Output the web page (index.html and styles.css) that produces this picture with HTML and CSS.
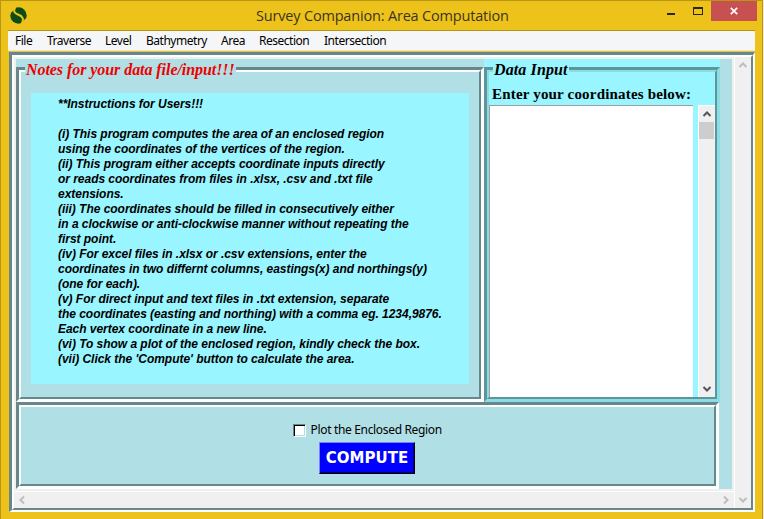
FILE: index.html
```html
<!DOCTYPE html>
<html lang="en">
<head>
<meta charset="utf-8">
<title>Survey Companion: Area Computation</title>
<link rel="stylesheet" href="styles.css">
</head>
<body>
<div class="window">
  <header class="titlebar">
    <svg class="logo" width="17" height="17" viewBox="0 0 17 17"><circle cx="8.5" cy="8.5" r="8.2" fill="#0d4d13"/><path d="M5.5 0C2.5 5 5 6.5 8.5 7.8C12.5 9.2 14.5 12 11.5 17" fill="none" stroke="#edc31b" stroke-width="2"/><path d="M0 0H6L2 5L0 6ZM17 17H11L15 12L17 11Z" fill="#edc31b"/></svg>
    <h1>Survey Companion: Area Computation</h1>
    <div class="controls">
      <span class="minimize"></span><span class="maximize"></span>
      <span class="close"><svg width="8" height="8" viewBox="0 0 8 8"><path d="M.8.8L7.2 7.2M7.2.8L.8 7.2" stroke="#fff" stroke-width="1.7"/></svg></span>
    </div>
  </header>
  <nav class="menu"><span>File</span><span>Traverse</span><span>Level</span><span>Bathymetry</span><span>Area</span><span>Resection</span><span>Intersection</span></nav>
  <main class="groove outer"><div class="groove-in shell">
    <div class="canvas">
      <div class="top">
        <section class="notes">
          <h2 class="legend"><span class="notes-title">Notes for your data file/input!!!</span></h2>
          <div class="groove frame"><div class="groove-in notes-in">
            <div class="instructions">**Instructions for Users!!!

(i) This program computes the area of an enclosed region
using the coordinates of the vertices of the region.
(ii) This program either accepts coordinate inputs directly
or reads coordinates from files in .xlsx, .csv and .txt file
extensions.
(iii) The coordinates should be filled in consecutively either
in a clockwise or anti-clockwise manner without repeating the
first point.
(iv) For excel files in .xlsx or .csv extensions, enter the
coordinates in two differnt columns, eastings(x) and northings(y)
(one for each).
(v) For direct input and text files in .txt extension, separate
the coordinates (easting and northing) with a comma eg. 1234,9876.
Each vertex coordinate in a new line.
(vi) To show a plot of the enclosed region, kindly check the box.
(vii) Click the 'Compute' button to calculate the area.</div>
          </div></div>
        </section>
        <section class="data">
          <h2 class="legend"><span class="data-title">Data Input</span></h2>
          <div class="groove frame aqua"><div class="groove-in data-in">
            <div class="prompt"><span>Enter your coordinates below:</span></div>
            <div class="entry">
              <div class="textarea"></div>
              <div class="scroll inner-scroll">
                <svg class="arrow dark" viewBox="0 0 16 16"><path d="M4.5 10L8 6.5L11.5 10"/></svg>
                <div class="thumb"></div>
                <svg class="arrow dark down" viewBox="0 0 16 16"><path d="M4.5 6L8 9.5L11.5 6"/></svg>
              </div>
            </div>
          </div></div>
        </section>
      </div>
      <section class="groove actions"><div class="groove-in actions-in">
        <label class="check"><i class="box"></i><span>Plot the Enclosed Region</span></label>
        <button class="compute"><span>COMPUTE</span></button>
      </div></section>
    </div>
    <div class="scroll vscroll">
      <svg class="arrow" viewBox="0 0 16 16"><path d="M4.5 10L8 6.5L11.5 10"/></svg>
      <svg class="arrow down" viewBox="0 0 16 16"><path d="M4.5 6L8 9.5L11.5 6"/></svg>
    </div>
    <div class="scroll hscroll">
      <svg class="arrow" viewBox="0 0 16 16"><path d="M10 4.5L6.5 8L10 11.5"/></svg>
      <svg class="arrow" viewBox="0 0 16 16"><path d="M6 4.5L9.5 8L6 11.5"/></svg>
    </div>
  </div></main>
</div>
</body>
</html>
```
FILE: styles.css
```css
* { box-sizing: border-box; }
body { margin: 0; width: 764px; height: 519px; overflow: hidden; background: #f3ecd0; color: #000; }
h1, h2 { margin: 0; font-weight: normal; }
svg { display: block; }
.window { width: 763px; height: 519px; background: #edc31b; border: 1px solid #b79615; border-bottom: 0; padding: 0 7px 0 7px; }
.titlebar { height: 30px; display: flex; justify-content: space-between; border-bottom: 1px solid #b79615; }
.logo { margin: 6px 0 0 2px; flex: none; }
h1 { font: 14.5px/30px "Open Sans", sans-serif; color: #3b3420; white-space: nowrap; width: 254px; margin-left: 72px; letter-spacing: -.18px; }
.controls { display: flex; width: 90px; height: 20px; margin-right: -2px; }
.minimize { width: 8px; height: 2px; background: #2b2718; margin: 12px 18px 0 0; }
.maximize { width: 10px; height: 8px; border: 1px solid #2b2718; border-top-width: 2px; margin: 6px 8px 0 0; }
.close { flex: 1; height: 20px; background: #c75050; display: grid; place-content: center; }
.menu { height: 20px; background: #f5f6f7; border-bottom: 1px solid #e6e6e6; display: grid; grid-template-columns: 32px 58px 41px 75px 38px 65px 1fr; padding-left: 7px; font: 12px/20px "Noto Sans", sans-serif; letter-spacing: -.48px; white-space: nowrap; }
.groove { border: 3px solid; border-color: #69868a #fbffff #fbffff #69868a; }
.groove-in { border: 2px solid; border-color: #fbffff #69868a #69868a #fbffff; height: 100%; }
.outer { margin-top: 1px; margin-left: 1px; width: 746px; height: 460px; border-right-width: 2px; border-bottom-width: 2px; }
.shell { background: #f0f0f0; display: grid; grid-template: 434px 17px / 720px 17px; }
.canvas { margin: 2px; width: 716px; height: 430px; background: #b0dfe5; }
.top { display: flex; height: 343px; }
.notes { width: 468px; }
.data { width: 236px; background: #99f5ff; }
.frame { height: 335px; }
.legend { height: 8px; padding-left: 9px; font: italic bold 16px/20px "Liberation Serif", serif; white-space: nowrap; }
.legend span { display: block; height: 21px; position: relative; top: 1px; padding-left: 1px; }
.notes-title { color: #ee0000; background: #b0dfe5; width: 211px; letter-spacing: -.06px; }
.data-title { background: #99f5ff; width: 76px; letter-spacing: .12px; }
.aqua { border-color: #5d9599 #8adce5 #8adce5 #5d9599; }
.aqua > .groove-in { border-color: #8adce5 #5d9599 #5d9599 #8adce5; }
.notes-in { padding: 21px 10px 13px; }
.instructions { height: 291px; background: #99f5ff; padding: 4px 0 0 27px; font: italic bold 12px/15px "Liberation Sans", sans-serif; letter-spacing: -.035px; white-space: pre; }
.prompt { height: 33px; padding: 12px 0 0 3px; font: bold 15px/20px "Liberation Serif", serif; letter-spacing: .18px; white-space: nowrap; }
.entry { display: flex; height: 292px; }
.textarea { width: 204px; background: #fff; border: 1px solid #a0a0a0; border-right: 0; border-bottom: 0; margin-right: 5px; }
.scroll { background: #f0f0f0; display: flex; justify-content: space-between; }
.inner-scroll { width: 17px; border-left: 1px solid #fff; border-top: 1px solid #fff; flex-direction: column; }
.thumb { height: 17px; width: 15px; background: #cdcdcd; margin-bottom: auto; }
.vscroll { grid-column: 2; grid-row: 1 / 3; flex-direction: column; border-left: 1px solid #fff; }
.hscroll { grid-column: 1; grid-row: 2; border-top: 1px solid #fff; }
.arrow { width: 16px; height: 16px; fill: none; stroke: #bdbdbd; stroke-width: 2; flex: none; }
.dark { stroke: #555; }
.actions { width: 703px; height: 87px; }
.actions-in { padding-top: 13px; display: flex; flex-direction: column; align-items: center; }
.check { display: flex; align-items: center; height: 20px; font: 12px/20px "Noto Sans", sans-serif; letter-spacing: -.33px; width: 150px; white-space: nowrap; gap: 5px; }
.box { width: 13px; height: 13px; background: #fff; border: 1px solid; border-color: #69868a #fff #fff #69868a; box-shadow: inset 1px 1px #000, inset -1px -1px #b0dfe5; flex: none; }
.compute { margin: 2px 1px 0 0; width: 96px; height: 32px; padding: 0; background: #00f; color: #fff; border: 1px solid; border-color: #8080ff #000 #000 #8080ff; box-shadow: inset -1px -1px #000080; font: bold 15px/28px "DejaVu Sans", sans-serif; white-space: nowrap; }
```
